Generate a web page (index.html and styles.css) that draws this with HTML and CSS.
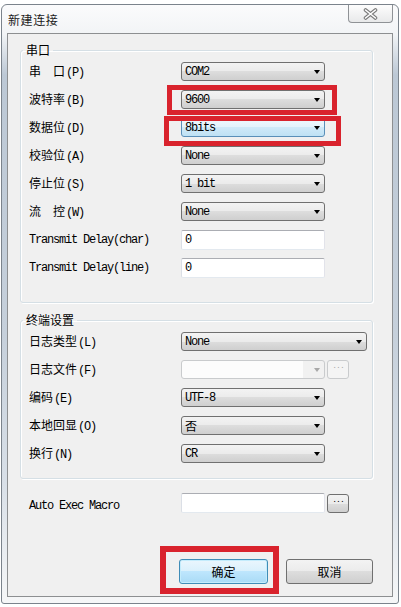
FILE: index.html
```html
<!DOCTYPE html>
<html lang="zh-CN">
<head>
    <meta charset="UTF-8">
    <meta name="viewport" content="width=device-width, initial-scale=1.0">
    <title>新建连接</title>
    <link rel="stylesheet" href="styles.css">
</head>
<body>
    <div class="window">
        <div class="titlebar">
            <span class="title">新建连接</span>
            <button class="close-btn" type="button">
                <svg width="15" height="12" viewBox="0 0 15 12">
                    <path d="M2.5 2 L12.5 10 M12.5 2 L2.5 10" stroke="#7a7a7a" stroke-width="3.6" stroke-linecap="round"/>
                    <path d="M2.5 2 L12.5 10 M12.5 2 L2.5 10" stroke="#ffffff" stroke-width="1.6" stroke-linecap="round"/>
                </svg>
            </button>
        </div>

        <div class="client">
            <!-- 串口 -->
            <fieldset class="group group-serial">
                <legend>串口</legend>
                <div class="rows">
                    <div class="row">
                        <label class="field-label">串　口<span class="key">(P)</span></label>
                        <div class="combo"><span class="combo-value">COM2</span><span class="arrow"></span></div>
                    </div>
                    <div class="row">
                        <label class="field-label">波特率<span class="key">(B)</span></label>
                        <div class="combo"><span class="combo-value">9600</span><span class="arrow"></span></div>
                    </div>
                    <div class="row">
                        <label class="field-label">数据位<span class="key">(D)</span></label>
                        <div class="combo focused"><span class="combo-value">8bits</span><span class="arrow"></span></div>
                    </div>
                    <div class="row">
                        <label class="field-label">校验位<span class="key">(A)</span></label>
                        <div class="combo"><span class="combo-value">None</span><span class="arrow"></span></div>
                    </div>
                    <div class="row">
                        <label class="field-label">停止位<span class="key">(S)</span></label>
                        <div class="combo"><span class="combo-value">1 bit</span><span class="arrow"></span></div>
                    </div>
                    <div class="row">
                        <label class="field-label">流　控<span class="key">(W)</span></label>
                        <div class="combo"><span class="combo-value">None</span><span class="arrow"></span></div>
                    </div>
                    <div class="row">
                        <label class="field-label latin">Transmit Delay(char)</label>
                        <div class="text-input">0</div>
                    </div>
                    <div class="row">
                        <label class="field-label latin">Transmit Delay(line)</label>
                        <div class="text-input">0</div>
                    </div>
                </div>
            </fieldset>

            <!-- 终端设置 -->
            <fieldset class="group group-term">
                <legend>终端设置</legend>
                <div class="rows">
                    <div class="row">
                        <label class="field-label">日志类型<span class="key">(L)</span></label>
                        <div class="combo wide"><span class="combo-value">None</span><span class="arrow"></span></div>
                    </div>
                    <div class="row">
                        <label class="field-label">日志文件<span class="key">(F)</span></label>
                        <div class="combo disabled"><span class="combo-value"></span><span class="arrow"></span></div>
                        <div class="dots-btn disabled">...</div>
                    </div>
                    <div class="row">
                        <label class="field-label">编码<span class="key">(E)</span></label>
                        <div class="combo"><span class="combo-value">UTF-8</span><span class="arrow"></span></div>
                    </div>
                    <div class="row">
                        <label class="field-label">本地回显<span class="key">(O)</span></label>
                        <div class="combo"><span class="combo-value cjk">否</span><span class="arrow"></span></div>
                    </div>
                    <div class="row">
                        <label class="field-label">换行<span class="key">(N)</span></label>
                        <div class="combo"><span class="combo-value">CR</span><span class="arrow"></span></div>
                    </div>
                </div>
            </fieldset>

            <div class="macro-row">
                <label class="field-label latin">Auto Exec Macro</label>
                <div class="text-input"></div>
                <div class="dots-btn">...</div>
            </div>

            <div class="actions">
                <button class="btn btn-default" type="button">确定</button>
                <button class="btn" type="button">取消</button>
            </div>
        </div>
    </div>

    <!-- 红框标注 -->
    <div class="mark mark-baud"></div>
    <div class="mark mark-data"></div>
    <div class="mark mark-ok"></div>
</body>
</html>
```

FILE: styles.css
```css
body {
    margin: 0;
    padding: 4px 0 0 1px;
    box-sizing: border-box;
    width: 401px;
    height: 607px;
    position: relative;
    overflow: hidden;
    background: #fff;
    font-family: "Noto Sans CJK SC", sans-serif;
    color: #000;
}

.window {
    box-sizing: border-box;
    width: 398px;
    height: 600px;
    border: 1px solid #7b838c;
    border-radius: 6px 6px 3px 3px;
    padding: 0 5px 6px;
    display: flex;
    flex-direction: column;
    background: linear-gradient(to bottom, #fbfbfc 0, #f2f4f6 29px, #bcc8d5 70px, #c6d0db 330px, #d9e0e8 480px, #f6f7f8 100%);
}

.titlebar {
    height: 28px;
    flex-shrink: 0;
    display: flex;
    align-items: center;
    padding-left: 1px;
}
.title {
    font-size: 12px;
    letter-spacing: 0.6px;
    color: #1b1b1b;
}
.close-btn {
    align-self: flex-start;
    margin-left: auto;
    width: 45px;
    height: 18px;
    padding: 0;
    border: 1px solid #8f9296;
    border-top: none;
    border-radius: 0 0 4px 4px;
    background: linear-gradient(#fdfdfd, #e8e9ea);
    display: flex;
    align-items: center;
    justify-content: center;
}

.client {
    flex: 1;
    border: 1px solid #8d8f91;
    background: #f0f0f0;
    padding: 9px 0 0 12px;
}

.group {
    box-sizing: border-box;
    width: 353px;
    margin: 0;
    padding: 5px 0 25px 8px;
    border: 1px solid #d5dfe5;
    border-radius: 3px;
    box-shadow: inset 1px 1px 0 #fff, 1px 1px 0 #fff;
}
.group legend {
    font-size: 12px;
    line-height: 14px;
    padding: 0 3px;
    margin-left: -6px;
}
.group-term {
    margin-top: 10px;
    padding-bottom: 15px;
}

.rows {
    display: flex;
    flex-direction: column;
    gap: 9px;
}
.row {
    display: flex;
    align-items: center;
    height: 19px;
}

.field-label {
    width: 152px;
    flex-shrink: 0;
    font-size: 12px;
    line-height: 14px;
    white-space: nowrap;
}
.key,
.latin {
    font-family: "Liberation Mono", monospace;
    font-size: 12px;
    letter-spacing: -1.2px;
}
.key {
    margin-left: 1px;
}

.combo {
    box-sizing: border-box;
    width: 144px;
    height: 19px;
    flex-shrink: 0;
    display: flex;
    align-items: center;
    padding-left: 3px;
    border: 1px solid #707070;
    border-radius: 3px;
    background: linear-gradient(#f3f3f3 0%, #ebebeb 50%, #dddddd 50%, #cfcfcf 100%);
    font-family: "Liberation Mono", "Noto Sans CJK SC", monospace;
    font-size: 12px;
    letter-spacing: -1.2px;
}
.combo-value {
    flex: 1;
}
.combo-value.cjk {
    font-family: "Noto Sans CJK SC", sans-serif;
    font-size: 12px;
    letter-spacing: 0;
}
.arrow {
    width: 0;
    height: 0;
    margin-right: 4px;
    border-left: 3.5px solid transparent;
    border-right: 3.5px solid transparent;
    border-top: 4px solid #000;
}
.combo.wide {
    width: 186px;
}
.combo.focused {
    border-color: #5a8fb8;
    background: linear-gradient(#f0f8fd 0%, #e3f2fb 50%, #cfe9f8 50%, #bfe1f4 100%);
}
.combo.disabled {
    border-color: #c9cbcd;
    background: linear-gradient(to right, #fcfcfc 0, #fcfcfc 85%, #f1f1f1 85%);
}
.combo.disabled .arrow {
    border-top-color: #a8a8a8;
}

.text-input {
    box-sizing: border-box;
    width: 144px;
    height: 20px;
    flex-shrink: 0;
    display: flex;
    align-items: center;
    padding-left: 3px;
    background: #fff;
    border: 1px solid;
    border-color: #abadb3 #e2e3ea #e3e9ef #dbdfe6;
    border-radius: 2px;
    font-family: "Liberation Mono", monospace;
    font-size: 12px;
}

.dots-btn {
    box-sizing: border-box;
    width: 22px;
    height: 19px;
    margin-left: 2px;
    border: 1px solid #707070;
    border-radius: 3px;
    background: linear-gradient(#f3f3f3 0%, #ebebeb 50%, #dddddd 50%, #cfcfcf 100%);
    font-family: "Liberation Mono", monospace;
    font-size: 8px;
    line-height: 10px;
    letter-spacing: -1px;
    text-align: center;
}
.dots-btn.disabled {
    border-color: #c9cbcd;
    background: #f4f4f4;
    color: #a8a8a8;
}

.macro-row {
    display: flex;
    align-items: center;
    margin: 14px 0 0 9px;
}
.macro-row .field-label {
    padding-top: 5px;
}

.actions {
    display: flex;
    justify-content: flex-end;
    gap: 18px;
    margin-top: 46px;
    padding-right: 19px;
}
.btn {
    box-sizing: border-box;
    width: 87px;
    height: 25px;
    padding: 0;
    border: 1px solid #707070;
    border-radius: 3px;
    background: linear-gradient(#f3f3f3 0%, #ebebeb 50%, #dddddd 50%, #cfcfcf 100%);
    font-family: "Noto Sans CJK SC", sans-serif;
    font-size: 12px;
    color: #000;
}
.btn-default {
    width: 89px;
    border-color: #3f8cb7;
    background: linear-gradient(#eaf6fd 0%, #d9f0fc 50%, #bee6fd 50%, #a9dbf6 100%);
    box-shadow: inset 0 0 0 1px #c4ecfc;
}

.mark {
    position: absolute;
    box-sizing: border-box;
    border: 5px solid #d9232d;
}
.mark-baud {
    left: 167px;
    top: 85px;
    width: 170px;
    height: 30px;
}
.mark-data {
    left: 164px;
    top: 116px;
    width: 177px;
    height: 30px;
}
.mark-ok {
    left: 160px;
    top: 546px;
    width: 119px;
    height: 48px;
    border-width: 6px;
}
```
